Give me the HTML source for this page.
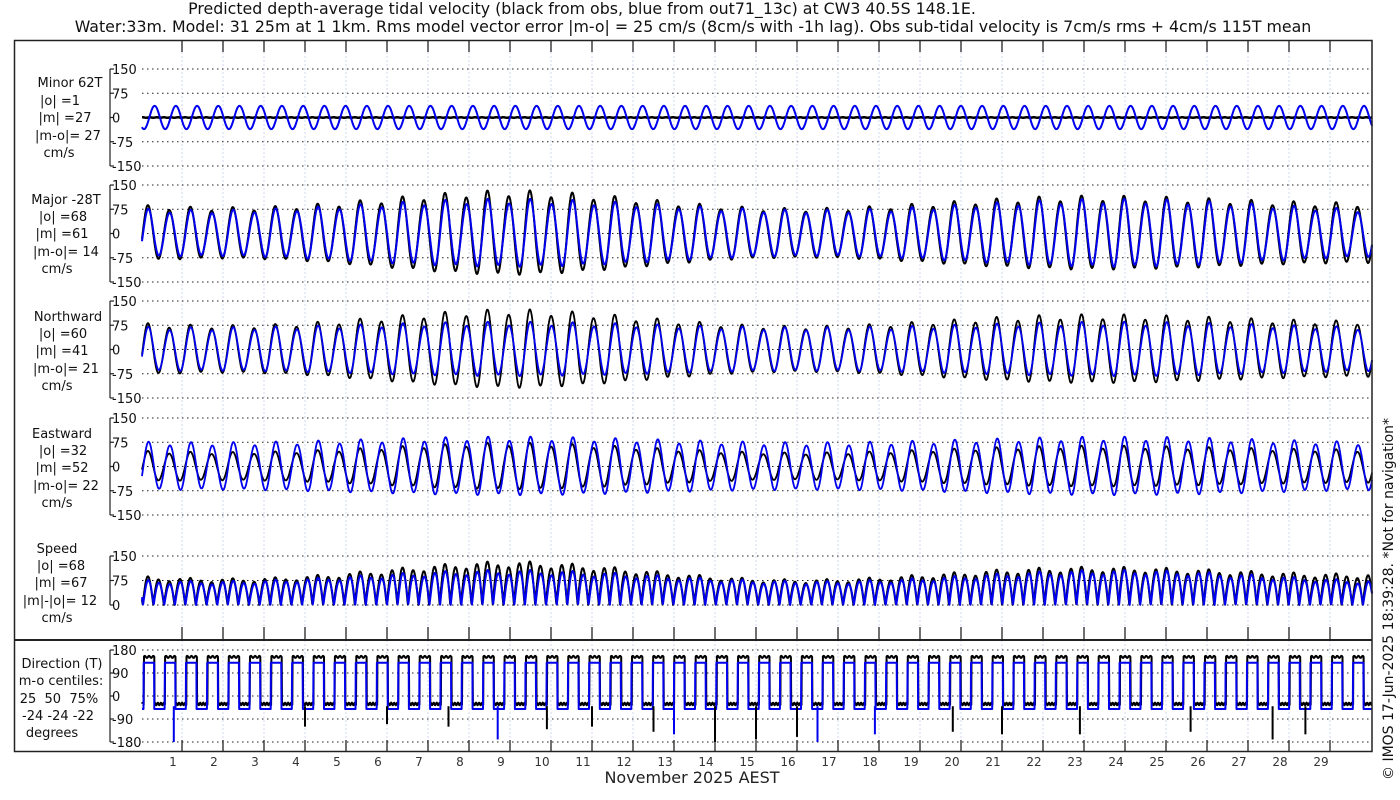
<!DOCTYPE html>
<html><head><meta charset="utf-8">
<style>
html,body{margin:0;padding:0;background:#fff;}
svg{display:block;font-family:"DejaVu Sans","Liberation Sans",sans-serif;}
</style></head>
<body>
<svg id="s" width="1400" height="800" viewBox="0 0 1400 800" xmlns="http://www.w3.org/2000/svg">
<rect width="1400" height="800" fill="#fff"/>
<text x="582" y="14" font-size="15.8" text-anchor="middle" fill="#111">Predicted depth-average tidal velocity (black from obs, blue from out71_13c) at CW3 40.5S 148.1E.</text>
<text x="693" y="32" font-size="15.8" text-anchor="middle" fill="#111">Water:33m. Model: 31 25m at 1 1km. Rms model vector error |m-o| = 25 cm/s (8cm/s with -1h lag). Obs sub-tidal velocity is 7cm/s rms + 4cm/s 115T mean</text>
<g id="grid"></g>
<g id="data"></g>
<rect x="14.5" y="40.5" width="1357.5" height="711" fill="none" stroke="#222" stroke-width="1.5"/>
<line x1="14" y1="640" x2="1372" y2="640" stroke="#222" stroke-width="2"/>
<g font-size="13" fill="#111" text-anchor="middle">
<text x="70" y="87">Minor 62T</text><text x="60" y="105">|o| =1</text><text x="65" y="122">|m| =27</text><text x="68" y="140">|m-o|= 27</text><text x="59" y="157">cm/s</text>
<text x="66" y="204">Major -28T</text><text x="63" y="221">|o| =68</text><text x="62" y="238">|m| =61</text><text x="66" y="256">|m-o|= 14</text><text x="57" y="273">cm/s</text>
<text x="68" y="321">Northward</text><text x="63" y="338">|o| =60</text><text x="62" y="355">|m| =41</text><text x="66" y="373">|m-o|= 21</text><text x="57" y="390">cm/s</text>
<text x="62" y="438">Eastward</text><text x="63" y="455">|o| =32</text><text x="62" y="472">|m| =52</text><text x="66" y="490">|m-o|= 22</text><text x="57" y="507">cm/s</text>
<text x="57" y="553">Speed</text><text x="61" y="570">|o| =68</text><text x="61" y="587">|m| =67</text><text x="60" y="605">|m|-|o|= 12</text><text x="57" y="622">cm/s</text>
<text x="62" y="668">Direction (T)</text><text x="61" y="685">m-o centiles:</text><text x="59" y="703">25&#160; 50&#160; 75%</text><text x="58" y="720">-24 -24 -22</text><text x="52" y="737">degrees</text>
</g>
<text x="692" y="783" font-size="16" text-anchor="middle" fill="#222">November 2025 AEST</text>
<text transform="translate(1393,780) rotate(-90)" font-size="14" fill="#111">© IMOS 17-Jun-2025 18:39:28. *Not for navigation*</text>
</svg>
<script>
(function(){
var NS="http://www.w3.org/2000/svg";
var grid=document.getElementById('grid'),data=document.getElementById('data');
function el(p,t,a){var e=document.createElementNS(NS,t);for(var k in a)e.setAttribute(k,a[k]);p.appendChild(e);return e;}
var X0=142,X1=1372;
function xd(t){return 182+(t-1)*41;}
for(var d=1;d<=29;d++){var x=xd(d);
 el(grid,'line',{x1:x,y1:40,x2:x,y2:752,stroke:'#d2d8f0','stroke-width':1,'stroke-dasharray':'2,2'});
 [[40,52],[627,640],[740,752]].forEach(function(r){el(grid,'line',{x1:x,y1:r[0],x2:x,y2:r[1],stroke:'#222','stroke-width':1.3});});
 var tx=el(grid,'text',{x:x-9,y:766,'font-size':12,'text-anchor':'middle',fill:'#333'});tx.textContent=d;}
var panels=[
 {top:69,bot:166,min:-150,max:150,ticks:[150,75,0,-75,-150]},
 {top:185,bot:282,min:-150,max:150,ticks:[150,75,0,-75,-150]},
 {top:301,bot:398,min:-150,max:150,ticks:[150,75,0,-75,-150]},
 {top:418,bot:515,min:-150,max:150,ticks:[150,75,0,-75,-150]},
 {top:556,bot:605,min:0,max:150,ticks:[150,75,0]},
 {top:650,bot:742,min:-180,max:180,ticks:[180,90,0,-90,-180]}];
panels.forEach(function(p){
 p.y=function(v){return p.bot-(v-p.min)/(p.max-p.min)*(p.bot-p.top);};
 el(grid,'line',{x1:110,y1:p.top,x2:110,y2:p.bot,stroke:'#222','stroke-width':1.2});
 p.ticks.forEach(function(v){var y=p.y(v);
  el(grid,'line',{x1:110,y1:y,x2:114,y2:y,stroke:'#222','stroke-width':1.2});
  el(grid,'line',{x1:142,y1:y,x2:1372,y2:y,stroke:'#222','stroke-width':1,'stroke-dasharray':'1.5,3.5'});
  var t=el(grid,'text',{x:112,y:y+5,'font-size':13,fill:'#111'});t.textContent=v;});
});
var T=12.42/24, t0=(X0-182)/41+1, t1=(X1-182)/41+1;
function S(t){return t<9?30-1.5*(9-t):30-1.1*(t-9);}
function C(t){return Math.cos(2*Math.PI*(t-9)/14.77);}
function Ao(t){return 95+S(t)*C(t);}
function Ab(t){return 84+16*C(t);}
function ph(t){return 2*Math.PI*(t-0.17)/T;}
function di(t){return 1+0.08*Math.cos(Math.PI*2*(t-0.17)/(2*T)+0.3);}
var P={};['mo','mb','nb','no','eo','eb','so','sb','Mo','Mb','do','db'].forEach(function(k){P[k]=[];});
var dt=0.006;
for(var t=t0;t<=t1+1e-9;t+=dt){
 var x=xd(t).toFixed(1),f=ph(t),g=di(t);
 var Mo=Ao(t)*Math.cos(f)*g, Mb=Ab(t)*Math.cos(f-0.12)*g;
 var mb=36*Math.sin(f-0.4);
 P.Mo.push(x+','+panels[1].y(Mo).toFixed(1));P.Mb.push(x+','+panels[1].y(Mb).toFixed(1));
 P.mo.push(x+','+panels[0].y(0.6*Math.sin(f*3)).toFixed(1));P.mb.push(x+','+panels[0].y(mb).toFixed(1));
 var No=0.93*Mo, Nb=(72+8*C(t))*Math.cos(f-0.12)*g;
 P.no.push(x+','+panels[2].y(No).toFixed(1));P.nb.push(x+','+panels[2].y(Nb).toFixed(1));
 var Eo=(0.55*Ao(t))*Math.cos(f)*g, Eb=(78+8*C(t))*Math.cos(f-0.2)*g;
 P.eo.push(x+','+panels[3].y(Eo).toFixed(1));P.eb.push(x+','+panels[3].y(Eb).toFixed(1));
 P.so.push(x+','+panels[4].y(Math.min(150,Math.abs(Mo))).toFixed(1));P.sb.push(x+','+panels[4].y(Math.abs(Mb)).toFixed(1));
 var cd=Math.cos(f-0.35);
 var dob=cd>0?153+4*Math.sin(f*5):-31+5*Math.sin(f*7);
 var dbb=Math.cos(f-0.25)>0?130:-51;
 P.do.push(x+','+panels[5].y(dob).toFixed(1));P.db.push(x+','+panels[5].y(dbb).toFixed(1));
}
function line(pts,c,w){el(data,'polyline',{points:pts.join(' '),fill:'none',stroke:c,'stroke-width':w,'stroke-linejoin':'round'});}
line(P.mo,'#000',2.5);line(P.mb,'#0000ee',2);
line(P.Mo,'#000',2);line(P.Mb,'#0000ee',2);
line(P.no,'#000',1.8);line(P.nb,'#0000ee',1.8);
line(P.eo,'#000',1.8);line(P.eb,'#0000ee',1.8);
line(P.so,'#000',2);line(P.sb,'#0000ee',2);
line(P.do,'#000',2);line(P.db,'#0000ee',2);
var py=panels[5].y;
[[0.8,-180,'#0000ee'],[8.7,-170,'#0000ee'],[16.5,-180,'#0000ee'],[13.0,-150,'#0000ee'],[17.9,-150,'#0000ee'],
 [14.0,-180,'#000'],[15.0,-170,'#000'],[16.0,-160,'#000'],[12.5,-140,'#000'],[21.0,-150,'#000'],[19.8,-140,'#000'],[22.9,-150,'#000'],[27.6,-170,'#000'],[28.4,-150,'#000'],[25.6,-140,'#000'],[4.0,-120,'#000'],[6.0,-110,'#000'],[7.5,-120,'#000'],[9.9,-130,'#000'],[11.0,-120,'#000']].forEach(function(s){
 var x=xd(s[0]);el(data,'line',{x1:x,y1:py(-40),x2:x,y2:py(s[1]),stroke:s[2],'stroke-width':2});});
})();
</script>
</body></html>
